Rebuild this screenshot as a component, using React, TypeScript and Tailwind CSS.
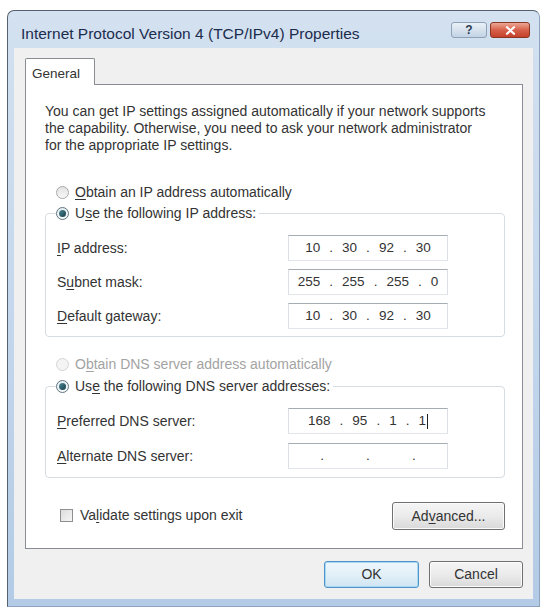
import React from "react";

function Radio({ state }: { state: "on" | "off" | "disabled" }) {
  if (state === "on") {
    return (
      <span className="flex items-center justify-center w-[13px] h-[13px] rounded-full border border-[#5f7480] bg-gradient-to-b from-[#e6eef2] to-[#f8fafb] shrink-0">
        <span className="w-[7px] h-[7px] rounded-full bg-gradient-to-br from-[#4f8a96] to-[#153f4c]" />
      </span>
    );
  }
  if (state === "disabled") {
    return <span className="w-[13px] h-[13px] rounded-full border border-[#d4d4d4] bg-[#f4f4f4] shrink-0" />;
  }
  return <span className="w-[13px] h-[13px] rounded-full border border-[#a9a9a9] bg-gradient-to-b from-[#e2e2e2] to-[#f7f7f7] shrink-0" />;
}

function IpField({ parts, caret }: { parts?: string[]; caret?: boolean }) {
  const base =
    "w-[160px] h-[26px] border border-t-[#a7abb2] border-x-[#dcdfe5] border-b-[#e2e6eb] bg-white flex items-center justify-center text-[13.5px] text-[#333]";
  if (!parts) {
    return (
      <div className={`${base} gap-[42px]`}>
        <span>.</span>
        <span>.</span>
        <span>.</span>
      </div>
    );
  }
  const items: React.ReactNode[] = [];
  parts.forEach((p, i) => {
    if (i > 0) items.push(<span key={`d${i}`}>.</span>);
    const last = i === parts.length - 1;
    items.push(
      <span key={`p${i}`} className="inline-flex items-center">
        {p}
        {last && caret ? <span className="ml-[1px] w-px h-[15px] bg-[#222]" /> : null}
      </span>
    );
  });
  return <div className={`${base} gap-[9px]`}>{items}</div>;
}

function FieldRow({ label, parts, caret }: { label: React.ReactNode; parts?: string[]; caret?: boolean }) {
  return (
    <div className="flex items-center h-[26px]">
      <div className="w-[232px] pl-px text-[14px] text-[#333]">{label}</div>
      <IpField parts={parts} caret={caret} />
    </div>
  );
}

function U({ children }: { children: React.ReactNode }) {
  return <span className="underline underline-offset-[2px] decoration-1">{children}</span>;
}

export default function App() {
  return (
    <div className="w-[546px] h-[607px] bg-white pt-[10px] pl-[7px] font-['Liberation_Sans',Arial,sans-serif] overflow-hidden">
      <div className="w-[533px] h-[597px] border border-[#56616f] border-b-[#8da3bd] border-r-[#8da3bd] rounded-t-[7px] bg-gradient-to-b from-[#d3e1f0] via-[#c4d7ec] to-[#b3cbe6] flex flex-col overflow-hidden">
        {/* title bar */}
        <div className="h-[37px] flex items-start shrink-0">
          <div className="pl-[13px] pt-[14px] text-[15.5px] leading-[18px] text-[#1c2c4d] whitespace-nowrap">
            Internet Protocol Version 4 (TCP/IPv4) Properties
          </div>
          <div className="ml-auto mr-[9px] mt-[11px] flex gap-[3px]">
            <div className="w-[36px] h-[16px] rounded-[3px] border border-[#8ea1b7] bg-gradient-to-b from-[#eaf1f7] to-[#c3d3e4] flex items-center justify-center text-[12px] leading-none font-bold text-[#2b3d55]">
              ?
            </div>
            <div className="w-[40px] h-[16px] rounded-[3px] border border-[#8a3526] bg-gradient-to-b from-[#eba795] via-[#d7604a] to-[#c4412b] flex items-center justify-center">
              <svg width="11" height="9" viewBox="0 0 11 9">
                <path d="M2 1.2 L9 7.8 M9 1.2 L2 7.8" stroke="#ffffff" strokeWidth="2.2" strokeLinecap="round" />
              </svg>
            </div>
          </div>
        </div>

        {/* client area */}
        <div className="mx-[6px] mb-[6px] bg-[#f0f0f0] pt-[10px] pl-[11px] pr-[10px] pb-[11px] flex flex-col">
          {/* tab */}
          <div className="flex">
            <div className="relative z-10 -mb-px w-[70px] h-[27px] bg-white border border-[#898c95] border-b-0 rounded-t-[2px] pl-[6px] pt-[5px] text-[13.5px] text-[#333]">
              General
            </div>
          </div>
          {/* panel */}
          <div className="border border-[#898c95] bg-white pl-[19px] pr-[17px] pt-[18px] pb-[18px] flex flex-col text-[14px] text-[#333]">
            <div className="leading-[17px] whitespace-nowrap">
              <div>You can get IP settings assigned automatically if your network supports</div>
              <div>the capability. Otherwise, you need to ask your network administrator</div>
              <div>for the appropriate IP settings.</div>
            </div>

            <div className="mt-[28px] h-[20px] flex items-center gap-[6px] pl-[11px]">
              <Radio state="off" />
              <span>
                <U>O</U>btain an IP address automatically
              </span>
            </div>

            <fieldset className="mt-[1px] border border-[#d5dde3] rounded-[4px] pl-[10px] pt-[12px] pb-[7px] flex flex-col gap-[8px]">
              <legend className="h-[20px] flex items-center gap-[6px] pr-[3px] bg-white">
                <Radio state="on" />
                <span>
                  U<U>s</U>e the following IP address:
                </span>
              </legend>
              <FieldRow label={<><U>I</U>P address:</>} parts={["10", "30", "92", "30"]} />
              <FieldRow label={<>S<U>u</U>bnet mask:</>} parts={["255", "255", "255", "0"]} />
              <FieldRow label={<><U>D</U>efault gateway:</>} parts={["10", "30", "92", "30"]} />
            </fieldset>

            <div className="mt-[17px] h-[20px] flex items-center gap-[6px] pl-[11px] text-[#a3a3a3]">
              <Radio state="disabled" />
              <span>
                O<U>b</U>tain DNS server address automatically
              </span>
            </div>

            <fieldset className="mt-[2px] border border-[#d5dde3] rounded-[4px] pl-[10px] pt-[12px] pb-[8px] flex flex-col gap-[9px]">
              <legend className="h-[20px] flex items-center gap-[6px] pr-[3px] bg-white">
                <Radio state="on" />
                <span>
                  Us<U>e</U> the following DNS server addresses:
                </span>
              </legend>
              <FieldRow label={<><U>P</U>referred DNS server:</>} parts={["168", "95", "1", "1"]} caret />
              <FieldRow label={<><U>A</U>lternate DNS server:</>} />
            </fieldset>

            <div className="mt-[24px] flex items-start justify-between">
              <div className="mt-[3px] h-[20px] flex items-center gap-[7px] pl-[15px]">
                <span className="w-[13px] h-[13px] border border-[#8e8f8f] bg-gradient-to-br from-[#dcdcdc] to-[#f6f6f6] shrink-0" />
                <span>
                  Va<U>l</U>idate settings upon exit
                </span>
              </div>
              <div className="w-[113px] h-[28px] rounded-[3px] border border-[#707070] bg-gradient-to-b from-[#f5f5f5] via-[#ebebeb] to-[#d9d9d9] shadow-[inset_0_0_0_1px_#fbfbfb] flex items-center justify-center">
                Ad<U>v</U>anced...
              </div>
            </div>
          </div>

          {/* buttons */}
          <div className="mt-[12px] flex justify-end gap-[10px] text-[14px] text-[#333]">
            <div className="w-[95px] h-[27px] rounded-[3px] border border-[#4f93c8] bg-gradient-to-b from-[#eef7fc] via-[#e3f0f8] to-[#cfe5f3] shadow-[inset_0_0_0_1px_#a9d8f2] flex items-center justify-center">
              OK
            </div>
            <div className="w-[94px] h-[27px] rounded-[3px] border border-[#707070] bg-gradient-to-b from-[#f5f5f5] via-[#ebebeb] to-[#d9d9d9] shadow-[inset_0_0_0_1px_#fbfbfb] flex items-center justify-center">
              Cancel
            </div>
          </div>
        </div>
      </div>
    </div>
  );
}
